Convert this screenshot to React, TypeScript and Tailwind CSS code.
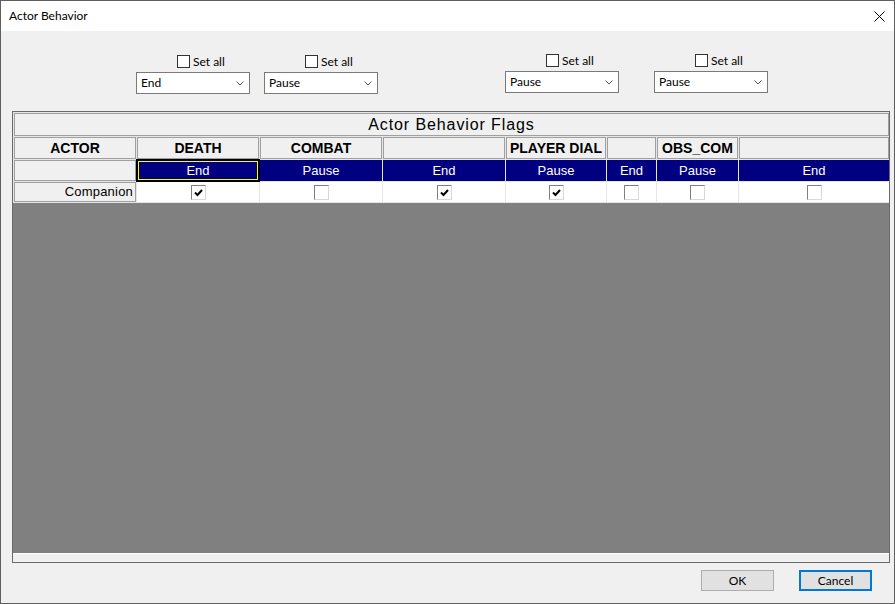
import React from "react";

type Col = {
  label: string;
  w: string;
  mode: string;
  checked: boolean;
  selected?: boolean;
};

const COLS: Col[] = [
  { label: "DEATH", w: "w-[122px]", mode: "End", checked: true, selected: true },
  { label: "COMBAT", w: "w-[122px]", mode: "Pause", checked: false },
  { label: "", w: "w-[122px]", mode: "End", checked: true },
  { label: "PLAYER DIAL", w: "w-[100px]", mode: "Pause", checked: true },
  { label: "", w: "w-[49px]", mode: "End", checked: false },
  { label: "OBS_COM", w: "w-[81px]", mode: "Pause", checked: false },
  { label: "", w: "w-[150px]", mode: "End", checked: false },
];

const TOP = [
  { value: "End", box: "ml-[135px] mt-px" },
  { value: "Pause", box: "ml-[14px] mt-px" },
  { value: "Pause", box: "ml-[127px]" },
  { value: "Pause", box: "ml-[35px]" },
];

const SetAllCombo = ({ value, box }: { value: string; box: string }) => (
  <div className={`flex flex-col ${box}`}>
    <div className="flex items-center h-[13px] pl-[41px] gap-[3px]">
      <div className="w-[13px] h-[13px] border border-[#333333] bg-white" />
      <span className="text-[12px] leading-[13px] text-black">Set all</span>
    </div>
    <div className="mt-[4px] w-[114px] h-[22px] border border-[#7a7a7a] bg-white flex items-center justify-between pl-[4px] pr-[5px]">
      <span className="text-[12px] text-black">{value}</span>
      <svg width="8" height="5" viewBox="0 0 8 5">
        <path d="M0.5 0.5 L4 4 L7.5 0.5" stroke="#555555" strokeWidth="1" fill="none" />
      </svg>
    </div>
  </div>
);

const GridCheck = ({ checked }: { checked: boolean }) => (
  <div className="w-[15px] h-[15px] border border-t-[#808080] border-l-[#808080] border-r-[#d8d8d8] border-b-[#d8d8d8] bg-white flex items-start justify-start pl-[2px] pt-[3px]">
    {checked && (
      <svg width="9" height="8" viewBox="0 0 9 8">
        <path d="M1 3.5 L3.5 6 L8 1" stroke="black" strokeWidth="2" fill="none" />
      </svg>
    )}
  </div>
);

export default function App() {
  return (
    <div className="w-[895px] h-[604px] border border-[#5f5f5f] bg-[#f0f0f0] flex flex-col overflow-hidden font-['Segoe_UI',Lato,sans-serif]">
      {/* Title bar */}
      <div className="h-[30px] shrink-0 bg-white flex items-center justify-between pl-[8px] pr-[9px]">
        <span className="text-[12px] text-black">Actor Behavior</span>
        <svg width="11" height="11" viewBox="0 0 11 11">
          <path d="M0.5 0.5 L10.5 10.5 M10.5 0.5 L0.5 10.5" stroke="black" strokeWidth="1" />
        </svg>
      </div>

      <div className="flex-1 flex flex-col">
        {/* Set all + combos */}
        <div className="flex items-start pt-[23px]">
          {TOP.map((t, i) => (
            <SetAllCombo key={i} value={t.value} box={t.box} />
          ))}
        </div>

        {/* Grid */}
        <div className="ml-[11px] mt-[17px] w-[878px] h-[452px] border border-[#6a6a6a] flex flex-col font-['Liberation_Sans',Arial,sans-serif] text-black">
          <div className="bg-[#e6e6e6] pl-px py-px flex flex-col gap-px">
            <div className="h-[23px] w-[875px] border border-[#a0a0a0] bg-[#f0f0f0] flex items-center justify-center text-[16px] tracking-[0.9px]">
              Actor Behavior Flags
            </div>

            <div className="flex gap-px h-[22px]">
              <div className="w-[122px] border border-[#a0a0a0] bg-[#f0f0f0] flex items-center justify-center text-[14px] font-bold">
                ACTOR
              </div>
              {COLS.map((c, i) => (
                <div key={i} className={`${c.w} border border-[#a0a0a0] bg-[#f0f0f0] flex items-center justify-center overflow-hidden whitespace-nowrap text-[14px] font-bold`}>
                  {c.label}
                </div>
              ))}
            </div>

            <div className="flex gap-px h-[21px]">
              <div className="w-[122px] border border-[#a0a0a0] bg-[#f0f0f0]" />
              {COLS.map((c, i) => (
                <div key={i} className={`${c.w} relative bg-[#000080] flex items-center justify-center text-[13px] text-white`}>
                  {c.mode}
                  {c.selected && (
                    <div className="absolute -inset-px border-2 border-black">
                      <div className="w-full h-full border border-[#ffff00]" />
                    </div>
                  )}
                </div>
              ))}
            </div>

            <div className="flex gap-px h-[20px]">
              <div className="w-[122px] border border-[#a0a0a0] bg-[#f0f0f0] flex items-center justify-end pr-[2px] text-[13px] tracking-[0.2px]">
                Companion
              </div>
              {COLS.map((c, i) => (
                <div key={i} className={`${c.w} bg-white flex items-center justify-center`}>
                  <GridCheck checked={c.checked} />
                </div>
              ))}
            </div>
          </div>
          <div className="flex-1 bg-[#808080]" />
          <div className="h-px bg-white" />
          <div className="h-[8px] bg-[#f0f0f0]" />
        </div>

        {/* Buttons */}
        <div className="flex justify-end gap-[25px] mr-[22px] mt-[7px]">
          <button className="w-[73px] h-[21px] border border-[#adadad] bg-[#e1e1e1] text-[12px] text-black flex items-center justify-center">
            OK
          </button>
          <button className="w-[73px] h-[21px] border-2 border-[#0078d7] bg-[#e1e1e1] text-[12px] text-black flex items-center justify-center">
            Cancel
          </button>
        </div>
      </div>
    </div>
  );
}
